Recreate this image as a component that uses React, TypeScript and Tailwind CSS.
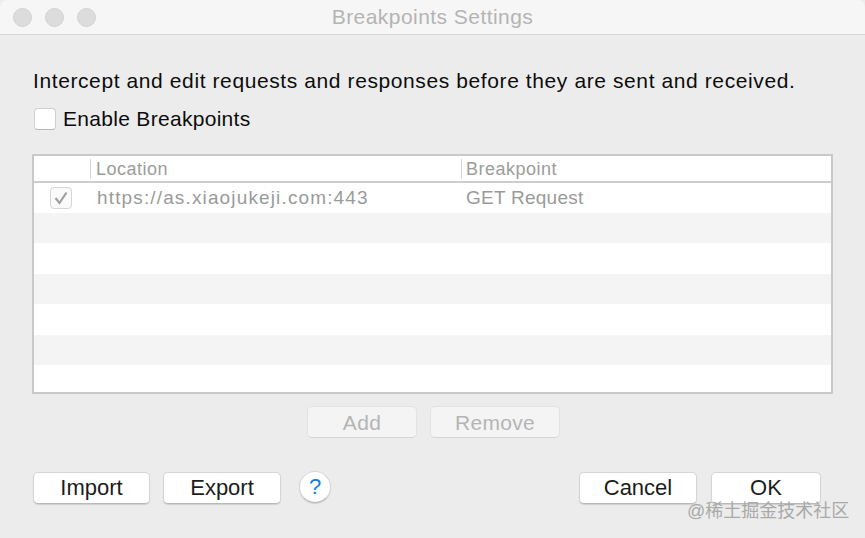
const rows = [0, 1, 2, 3, 4, 5];

const Btn = ({ label, className }: { label: string; className: string }) => (
  <button className={`flex items-center justify-center rounded-[5px] bg-white pb-[1px] text-[22px] leading-none text-[#1c1c1c] border border-[#d6d6d6] border-b-[#b9b9b9] shadow-[0_1px_1px_rgba(0,0,0,0.12)] ${className}`}>
    {label}
  </button>
);

const DisabledBtn = ({ label, className }: { label: string; className: string }) => (
  <button className={`flex items-center justify-center rounded-[5px] bg-[#f4f4f4] text-[21px] leading-none tracking-[0.3px] text-[#b5b5b5] border border-[#e2e2e2] border-b-[#d4d4d4] ${className}`}>
    {label}
  </button>
);

export default function App() {
  return (
    <div className="relative flex h-[538px] w-[865px] flex-col overflow-hidden bg-[#ececec] font-['Liberation_Sans',Arial,sans-serif]">
      <div className="flex h-[35px] shrink-0 items-center rounded-t-[7px] border-b border-[#d5d5d5] bg-[#f6f6f6]">
        <div className="flex gap-[13px] pl-[13px]">
          <span className="h-[19px] w-[19px] rounded-full bg-[#dcdcdc] border border-[#d2d2d2]" />
          <span className="h-[19px] w-[19px] rounded-full bg-[#dcdcdc] border border-[#d2d2d2]" />
          <span className="h-[19px] w-[19px] rounded-full bg-[#dcdcdc] border border-[#d2d2d2]" />
        </div>
        <div className="flex-1 pr-[96px] text-center text-[21px] tracking-[0.45px] text-[#b4b4b4]">Breakpoints Settings</div>
      </div>

      <div className="flex flex-1 flex-col pl-[32px] pr-[32px]">
        <p className="mt-[34px] ml-[1px] whitespace-nowrap text-[21px] leading-[24px] tracking-[0.6px] text-[#0c0c0c]">
          Intercept and edit requests and responses before they are sent and received.
        </p>
        <label className="mt-[14px] flex items-center gap-[7px]">
          <span className="ml-[2px] h-[22px] w-[22px] rounded-[4px] border border-[#cfcfcf] border-b-[#b8b8b8] bg-white" />
          <span className="text-[21px] leading-[24px] tracking-[0.3px] text-[#0c0c0c]">Enable Breakpoints</span>
        </label>

        <div className="mt-[23px] h-[240px] w-[801px] border-2 border-[#c9c9c9] bg-white">
          <div className="flex h-[27px] items-center border-b-2 border-[#cdcdcd] text-[18px] tracking-[0.5px] text-[#9c9c9c]">
            <div className="w-[56px] shrink-0" />
            <div className="h-[20px] w-[371px] shrink-0 border-l border-[#d6d6d6] pl-[5px] leading-[20px]">Location</div>
            <div className="h-[20px] flex-1 border-l border-[#d6d6d6] pl-[4px] leading-[20px]">Breakpoint</div>
          </div>
          {rows.map((i) => (
            <div key={i} className={`flex items-center text-[#9a9a9a] ${i === 0 ? "h-[29.5px]" : "h-[30.5px]"} ${i % 2 === 1 ? "bg-[#f4f4f4]" : "bg-white"}`}>
              {i === 0 && (
                <>
                  <div className="flex w-[56px] shrink-0 justify-center pr-[3px]">
                    <span className="flex h-[22px] w-[22px] items-center justify-center rounded-[4px] border border-[#d6d6d6] bg-[#fafafa]">
                      <svg width="16" height="16" viewBox="0 0 16 16" fill="none">
                        <path d="M2.5 8 L6.5 13 L13.5 2.5" stroke="#a0a0a0" strokeWidth="2.2" />
                      </svg>
                    </span>
                  </div>
                  <div className="w-[370px] shrink-0 whitespace-nowrap pl-[7px] text-[19px] tracking-[1.14px]">https://as.xiaojukeji.com:443</div>
                  <div className="flex-1 pl-[6px] text-[19px] tracking-[0.25px]">GET Request</div>
                </>
              )}
            </div>
          ))}
        </div>

        <div className="mt-[12px] flex justify-center gap-[13px] pl-[2px]">
          <DisabledBtn label="Add" className="h-[32px] w-[110px]" />
          <DisabledBtn label="Remove" className="h-[32px] w-[130px]" />
        </div>

        <div className="mt-[33px] flex items-center">
          <Btn label="Import" className="ml-[1px] h-[32px] w-[117px]" />
          <Btn label="Export" className="ml-[13px] h-[32px] w-[118px]" />
          <button className="ml-[18px] mb-[2px] flex h-[32px] w-[32px] items-center justify-center rounded-full border border-[#d6d6d6] border-b-[#b9b9b9] bg-white text-[22px] leading-none text-[#1a7be0] shadow-[0_1px_1px_rgba(0,0,0,0.12)]">?</button>
          <Btn label="Cancel" className="ml-auto h-[32px] w-[118px]" />
          <Btn label="OK" className="ml-[14px] mr-[12px] h-[32px] w-[110px]" />
        </div>
      </div>

      <div className="absolute left-[687px] top-[500px] text-[18px] leading-[22px] text-[#a9a9a9] font-['Liberation_Sans','Noto_Sans_CJK_SC',sans-serif]">
        @稀土掘金技术社区
      </div>
    </div>
  );
}
